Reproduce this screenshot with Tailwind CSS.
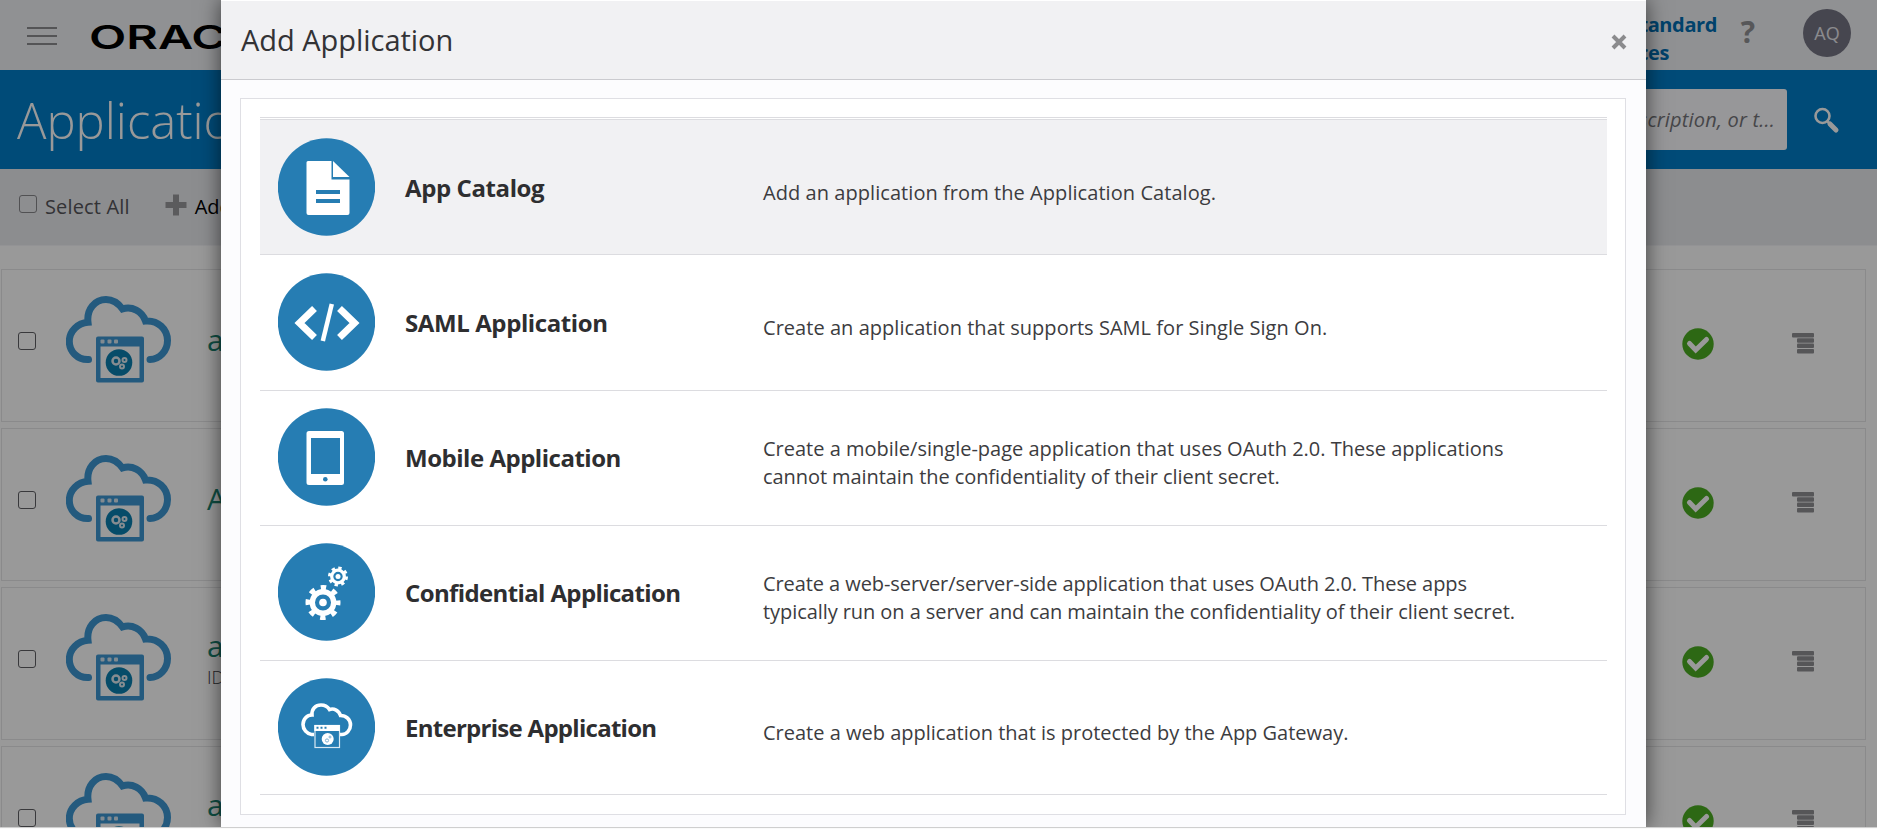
<!DOCTYPE html>
<html lang="en">
<head>
<meta charset="utf-8">
<title>Add Application</title>
<script src="https://cdn.jsdelivr.net/npm/@tailwindcss/browser@4"></script>
</head>
<body class="bg-[#fafafa] font-['Open_Sans','Noto_Sans',sans-serif] text-[#2e2e30]">
<svg class="hidden">
  <symbol id="app" viewBox="0 0 105 88">
    <path d="M22.500 63.500C11 64 3.300 55 3.300 45.500C3.300 35 12 27 22 26.300C20.500 13 29 3.500 40 3.500C48 3.500 52.500 7.500 56.500 13C66 10 76 15 79.500 25C92 24 101.500 33 101.500 44.500C101.500 55 93.500 63.500 84 63.500" fill="none" stroke="#3c96d2" stroke-width="7" stroke-linecap="round" stroke-linejoin="miter"/>
    <path fill-rule="evenodd" d="M32 40.500h44a2 2 0 0 1 2 2v42a2 2 0 0 1-2 2H32a2 2 0 0 1-2-2v-42a2 2 0 0 1 2-2zM34.500 50.500v31.500h39v-31.500z" fill="#3c96d2"/>
    <g fill="#d8e6f0"><rect x="34.500" y="43.500" width="4" height="4" rx="1"/><rect x="41.500" y="43.500" width="4" height="4" rx="1"/><rect x="48" y="43.500" width="4" height="4" rx="1"/></g>
    <circle cx="53" cy="66.500" r="13.300" fill="#0a7fb0"/>
    <g fill="none" stroke="#dfeaf0"><circle cx="50" cy="65" r="3.500" stroke-width="2.500"/><circle cx="58.500" cy="64" r="2" stroke-width="2"/><circle cx="56" cy="70.500" r="2" stroke-width="2"/></g>
  </symbol>
  <symbol id="ok" viewBox="0 0 32 32"><circle cx="16" cy="16" r="15.700" fill="#4cad22"/><path d="M7.500 15.500L13.700 22L24.500 11.500" fill="none" stroke="#fff" stroke-width="5" stroke-linecap="round" stroke-linejoin="miter"/></symbol>
  <symbol id="menu" viewBox="0 0 22 21"><g fill="#8f8f93"><rect width="22" height="4.600" rx="1"/><rect x="5" y="5.300" width="17" height="4.500" rx="1"/><rect x="5" y="10.600" width="17" height="4.500" rx="1"/><rect x="5" y="16" width="17" height="4.500" rx="1"/></g></symbol>
</svg>
<div class="relative h-[828px] overflow-hidden border-b border-[#cfcfcf] bg-white">
  <header class="flex h-[70px] bg-[#f0f2f5]">
    <div class="ml-[27px] mt-[27px] flex h-[18px] w-[30px] flex-col justify-between"><i class="h-[2px] bg-[#8d8d90]"></i><i class="h-[2px] bg-[#8d8d90]"></i><i class="h-[2px] bg-[#8d8d90]"></i></div>
    <svg class="ml-[32px] mt-[18px] h-[36px] w-[200px]"><text x="0" y="30.500" textLength="195" lengthAdjust="spacingAndGlyphs" class="font-['Inter',sans-serif] text-[33px] font-semibold">ORACLE</text></svg>
    <div class="ml-auto w-[200px] pt-[11px] text-right text-[20px] leading-[28px] font-bold tracking-[-0.4px] text-[#006eb3]"><div>Standard</div><div class="pr-[48px]">Services</div></div>
    <div class="ml-[22px] mt-[12px] w-[18px] text-center text-[30px] leading-[40px] font-bold text-[#919194]">?</div>
    <div class="mt-[9px] mr-[26px] ml-[46px] flex h-[48px] w-[48px] items-center justify-center rounded-full bg-[#757584] pt-px text-[18px] text-[#e8e8ee]">AQ</div>
  </header>
  <div class="flex h-[99px] bg-[#007dc8]">
    <h1 class="ml-[17px] text-[49px] leading-[101px] font-light text-white">Applications</h1>
    <div class="ml-auto mt-[19px] flex h-[61px] w-[420px] items-center justify-end rounded-[3px] bg-[#fcfcff] pt-px pr-[12px] text-[20px] tracking-[0.2px] text-[#75757a] italic">Search by name, description, or t...</div>
    <svg class="mr-[37px] ml-[26px] mt-[36px] h-[28px] w-[27px]" viewBox="0 0 27 28" fill="none" stroke="#fff"><circle cx="9.500" cy="10" r="7" stroke-width="2.600"/><path d="M14.500 15.500L17 18" stroke-width="2.500"/><path d="M17 18L23 24" stroke-width="5" stroke-linecap="round"/></svg>
  </div>
  <div class="flex h-[77px] border-b border-[#f6f6f8] bg-[#eaebee] text-[20px] leading-[28px]">
    <i class="mt-[26px] ml-[19px] h-[18px] w-[18px] rounded-[3px] border-[1.500px] border-[#87878b] bg-white/10"></i>
    <span class="mt-[24px] ml-[8px] tracking-[0.15px] text-[#55555a]">Select All</span>
    <svg class="mt-[25px] ml-[35px] h-[22px] w-[22px]" viewBox="0 0 22 22"><path d="M8 0.500h6v7.500h7.500v6H14v7.500H8V14H0.500V8H8z" fill="#98989c"/></svg>
    <span class="mt-[24px] ml-[8px] text-black">Add</span>
  </div>
  <main class="flex flex-col gap-[6px] pt-[23px] pl-px">
    <div class="flex h-[153px] w-[1865px] shrink-0 border border-[#e6e6e8]">
      <i class="mt-[62px] ml-[16px] h-[18px] w-[18px] rounded-[3px] border-[1.500px] border-[#606065] bg-white"></i><svg class="mt-[26px] ml-[30px] h-[88px] w-[105px]"><use href="#app"/></svg>
      <div class="mt-[53px] ml-[36px] text-[30px] leading-[34px] text-[#198370]">adminconsole</div>
      <svg class="mt-[58px] mr-px ml-auto h-[32px] w-[32px]"><use href="#ok"/></svg><svg class="mt-[63px] mr-[51px] ml-[77px] h-[21px] w-[22px]"><use href="#menu"/></svg>
    </div>
    <div class="flex h-[153px] w-[1865px] shrink-0 border border-[#e6e6e8]">
      <i class="mt-[62px] ml-[16px] h-[18px] w-[18px] rounded-[3px] border-[1.500px] border-[#606065] bg-white"></i><svg class="mt-[26px] ml-[30px] h-[88px] w-[105px]"><use href="#app"/></svg>
      <div class="mt-[53px] ml-[36px] text-[30px] leading-[34px] text-[#198370]">Analytics</div>
      <svg class="mt-[58px] mr-px ml-auto h-[32px] w-[32px]"><use href="#ok"/></svg><svg class="mt-[63px] mr-[51px] ml-[77px] h-[21px] w-[22px]"><use href="#menu"/></svg>
    </div>
    <div class="flex h-[153px] w-[1865px] shrink-0 border border-[#e6e6e8]">
      <i class="mt-[62px] ml-[16px] h-[18px] w-[18px] rounded-[3px] border-[1.500px] border-[#606065] bg-white"></i><svg class="mt-[26px] ml-[30px] h-[88px] w-[105px]"><use href="#app"/></svg>
      <div class="mt-[41px] ml-[36px] text-[30px] leading-[34px] text-[#198370]">analytics<div class="text-[18px] leading-[29px] font-light text-[#404045]">ID: 001</div></div>
      <svg class="mt-[58px] mr-px ml-auto h-[32px] w-[32px]"><use href="#ok"/></svg><svg class="mt-[63px] mr-[51px] ml-[77px] h-[21px] w-[22px]"><use href="#menu"/></svg>
    </div>
    <div class="flex h-[153px] w-[1865px] shrink-0 border border-[#e6e6e8]">
      <i class="mt-[62px] ml-[16px] h-[18px] w-[18px] rounded-[3px] border-[1.500px] border-[#606065] bg-white"></i><svg class="mt-[26px] ml-[30px] h-[88px] w-[105px]"><use href="#app"/></svg>
      <div class="mt-[41px] ml-[36px] text-[30px] leading-[34px] text-[#198370]">apps</div>
      <svg class="mt-[58px] mr-px ml-auto h-[32px] w-[32px]"><use href="#ok"/></svg><svg class="mt-[63px] mr-[51px] ml-[77px] h-[21px] w-[22px]"><use href="#menu"/></svg>
    </div>
  </main>
  <div class="absolute inset-0 bg-black/40 pl-[221px]">
    <section class="h-full w-[1425px] bg-[#fcfcfe] shadow-[0_0_20px_rgba(0,0,0,0.6)]">
      <div class="flex h-[80px] items-center border-t border-b border-t-white border-b-[#cbcbcf] bg-[#f1f1f3] pr-[19px] pl-[20px]">
        <h2 class="text-[29px] leading-[40px] tracking-[-0.03px] text-[#333336]">Add Application</h2>
        <svg class="mt-[4px] ml-auto h-[16px] w-[16px]" viewBox="0 0 16 16"><path d="M2 2L14 14M14 2L2 14" stroke="#8b8b8d" stroke-width="4"/></svg>
      </div>
      <div class="mt-[18px] ml-[19px] h-[717px] w-[1386px] border border-[#dfdfe4] bg-white pt-[18px] pr-[18px] pl-[19px]">
        <div class="border-t border-[#dcdce0] pt-px">
          <div class="h-[136px] border-t border-b border-t-[#dcdce0] border-b-[#dcdce0] bg-[#f1f1f3] pt-[18px] pl-[18px]">
            <div class="flex h-[97px] items-center">
              <svg class="h-[98px] w-[97px]" viewBox="0 0 97 98"><circle cx="48.500" cy="49" r="48.700" fill="#267db3"/><path d="M30 23H53.500V41.500H71.500V75a2 2 0 0 1-2 2H30.500a2 2 0 0 1-2-2V24.500A1.500 1.500 0 0 1 30 23z" fill="#fff"/><path d="M55 23V39H71.500z" fill="#fff"/><path d="M38 54H62M38 63H62" stroke="#267db3" stroke-width="3.800"/></svg>
              <h3 class="ml-[30px] w-[358px] pt-[3px] text-[24px] leading-[32px] font-bold tracking-[-0.4px]">App Catalog</h3>
              <p class="pt-[12px] text-[20px] leading-[28px] tracking-[0.06px] text-[#3c3c40]">Add an application from the Application Catalog.</p>
            </div>
          </div>
          <div class="h-[136px] border-b border-[#dcdce0] pt-[18px] pl-[18px]">
            <div class="flex h-[97px] items-center">
              <svg class="h-[98px] w-[97px]" viewBox="0 0 97 98"><circle cx="48.500" cy="49" r="48.700" fill="#267db3"/><path d="M36.500 35.500L21.500 50L36.500 64.500M61.500 35.500L76.500 50L61.500 64.500" fill="none" stroke="#fff" stroke-width="7"/><path d="M53.800 31L44.800 68" stroke="#fff" stroke-width="4.500"/></svg>
              <h3 class="ml-[30px] w-[358px] pt-[3px] text-[24px] leading-[32px] font-bold tracking-[-0.4px]">SAML Application</h3>
              <p class="pt-[12px] text-[20px] leading-[28px] tracking-[0.04px] text-[#3c3c40]">Create an application that supports SAML for Single Sign On.</p>
            </div>
          </div>
          <div class="h-[135px] border-b border-[#dcdce0] pt-[17px] pl-[18px]">
            <div class="flex h-[97px] items-center">
              <svg class="h-[98px] w-[97px]" viewBox="0 0 97 98"><circle cx="48.500" cy="49" r="48.700" fill="#267db3"/><path fill-rule="evenodd" d="M31 23H63.500A2.500 2.500 0 0 1 66 25.500V74.500A2.500 2.500 0 0 1 63.500 77H31A2.500 2.500 0 0 1 28.500 74.500V25.500A2.500 2.500 0 0 1 31 23zM33 30V66H62V30z" fill="#fff"/><circle cx="47.300" cy="71.300" r="2.300" fill="#267db3"/></svg>
              <h3 class="ml-[30px] w-[358px] pt-[3px] text-[24px] leading-[32px] font-bold tracking-[-0.48px]">Mobile Application</h3>
              <p class="pt-[12px] text-[20px] leading-[28px] text-[#3c3c40]"><span>Create a mobile/single-page application that uses OAuth 2.0. These applications</span><br><span class="tracking-[-0.07px]">cannot maintain the confidentiality of their client secret.</span></p>
            </div>
          </div>
          <div class="h-[135px] border-b border-[#dcdce0] pt-[17px] pl-[18px]">
            <div class="flex h-[97px] items-center">
              <svg class="h-[98px] w-[97px]" viewBox="0 0 97 98"><circle cx="48.500" cy="49" r="48.700" fill="#267db3"/>
                <circle cx="45" cy="59.500" r="10.700" fill="none" stroke="#fff" stroke-width="5.400"/><circle cx="45" cy="59.500" r="3.800" fill="#fff"/><circle cx="45" cy="59.500" r="15" fill="none" stroke="#fff" stroke-width="5" stroke-dasharray="5.400 6.381" stroke-dashoffset="2.700"/>
                <circle cx="60" cy="33.500" r="6.300" fill="none" stroke="#fff" stroke-width="3.200"/><circle cx="60" cy="33.500" r="2.500" fill="#fff"/><circle cx="60" cy="33.500" r="8.500" fill="none" stroke="#fff" stroke-width="3" stroke-dasharray="3.300 3.376"/></svg>
              <h3 class="ml-[30px] w-[358px] pt-[3px] text-[24px] leading-[32px] font-bold tracking-[-0.62px]">Confidential Application</h3>
              <p class="pt-[12px] text-[20px] leading-[28px] text-[#3c3c40]"><span class="tracking-[-0.08px]">Create a web-server/server-side application that uses OAuth 2.0. These apps</span><br><span class="tracking-[-0.07px]">typically run on a server and can maintain the confidentiality of their client secret.</span></p>
            </div>
          </div>
          <div class="h-[134px] border-b border-[#dcdce0] pt-[17px] pl-[18px]">
            <div class="flex h-[97px] items-center">
              <svg class="h-[98px] w-[97px]" viewBox="0 0 97 98"><circle cx="48.500" cy="49" r="48.700" fill="#267db3"/><path d="M36 56.500H33.500C29 56 25 51.500 25 46.500C25 41 29 37 34 37C33.500 31 37.500 27 43 27C47 27 49.500 28.500 51.500 31.500C56 30 61 32.500 62.500 37.500C68 37.500 72.500 41.500 72.500 47C72.500 52 68.500 56.500 64 56.500H62" fill="none" stroke="#fff" stroke-width="3.600"/><rect x="37" y="47.500" width="24.500" height="22" fill="#267db3" stroke="#d8e8f2" stroke-width="1.200"/><path d="M36.300 47h25.500v6H36.300z" fill="#fff"/><path d="M38.500 49.700h2M42.500 49.700h2M46.500 49.700h2" stroke="#267db3" stroke-width="2"/><circle cx="49.700" cy="61" r="6" fill="#fff"/><g fill="none" stroke="#7fb1d2"><circle cx="49" cy="62.500" r="1.600"/><circle cx="52" cy="59" r="1"/></g></svg>
              <h3 class="ml-[30px] w-[358px] pt-[3px] text-[24px] leading-[32px] font-bold tracking-[-0.72px]">Enterprise Application</h3>
              <p class="pt-[12px] text-[20px] leading-[28px] text-[#3c3c40]">Create a web application that is protected by the App Gateway.</p>
            </div>
          </div>
        </div>
      </div>
    </section>
  </div>
</div>
</body>
</html>
